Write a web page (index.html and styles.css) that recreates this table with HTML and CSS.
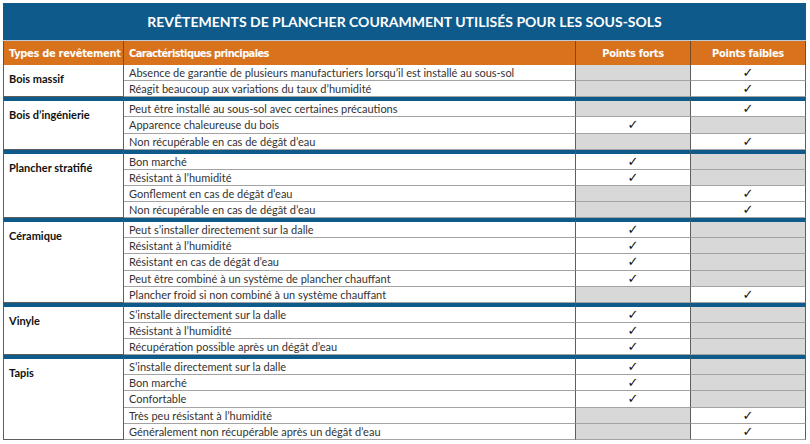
FILE: index.html
```html
<!DOCTYPE html>
<html lang="fr">
<head>
<meta charset="utf-8">
<title>Revêtements de plancher</title>
<link rel="stylesheet" href="styles.css">
</head>
<body>
<div class="sheet">
  <div class="title">REVÊTEMENTS DE PLANCHER COURAMMENT UTILISÉS POUR LES SOUS-SOLS</div>
  <table class="grid">
    <colgroup>
      <col class="c-type"><col class="c-desc"><col class="c-pt"><col class="c-pt">
    </colgroup>
    <thead>
      <tr class="head">
        <th class="h-left">Types de revêtement</th>
        <th class="h-left">Caractéristiques principales</th>
        <th>Points forts</th>
        <th>Points faibles</th>
      </tr>
    </thead>
    <tbody>
      <tr class="first">
        <td class="type" rowspan="2">Bois massif</td>
        <td class="desc">Absence de garantie de plusieurs manufacturiers lorsqu’il est installé au sous-sol</td>
        <td class="off"></td><td class="on">✓</td>
      </tr>
      <tr><td class="desc">Réagit beaucoup aux variations du taux d’humidité</td><td class="off"></td><td class="on">✓</td></tr>

      <tr class="sec">
        <td class="type" rowspan="3">Bois d’ingénierie</td>
        <td class="desc">Peut être installé au sous-sol avec certaines précautions</td>
        <td class="off"></td><td class="on">✓</td>
      </tr>
      <tr><td class="desc">Apparence chaleureuse du bois</td><td class="on">✓</td><td class="off"></td></tr>
      <tr><td class="desc">Non récupérable en cas de dégât d’eau</td><td class="off"></td><td class="on">✓</td></tr>

      <tr class="sec">
        <td class="type" rowspan="4">Plancher stratifié</td>
        <td class="desc">Bon marché</td>
        <td class="on">✓</td><td class="off"></td>
      </tr>
      <tr><td class="desc">Résistant à l’humidité</td><td class="on">✓</td><td class="off"></td></tr>
      <tr><td class="desc">Gonflement en cas de dégât d’eau</td><td class="off"></td><td class="on">✓</td></tr>
      <tr><td class="desc">Non récupérable en cas de dégât d’eau</td><td class="off"></td><td class="on">✓</td></tr>

      <tr class="sec">
        <td class="type" rowspan="5">Céramique</td>
        <td class="desc">Peut s’installer directement sur la dalle</td>
        <td class="on">✓</td><td class="off"></td>
      </tr>
      <tr><td class="desc">Résistant à l’humidité</td><td class="on">✓</td><td class="off"></td></tr>
      <tr><td class="desc">Résistant en cas de dégât d’eau</td><td class="on">✓</td><td class="off"></td></tr>
      <tr><td class="desc">Peut être combiné à un système de plancher chauffant</td><td class="on">✓</td><td class="off"></td></tr>
      <tr><td class="desc">Plancher froid si non combiné à un système chauffant</td><td class="off"></td><td class="on">✓</td></tr>

      <tr class="sec">
        <td class="type" rowspan="3">Vinyle</td>
        <td class="desc">S’installe directement sur la dalle</td>
        <td class="on">✓</td><td class="off"></td>
      </tr>
      <tr><td class="desc">Résistant à l’humidité</td><td class="on">✓</td><td class="off"></td></tr>
      <tr><td class="desc">Récupération possible après un dégât d’eau</td><td class="on">✓</td><td class="off"></td></tr>

      <tr class="sec">
        <td class="type" rowspan="5">Tapis</td>
        <td class="desc">S’installe directement sur la dalle</td>
        <td class="on">✓</td><td class="off"></td>
      </tr>
      <tr><td class="desc">Bon marché</td><td class="on">✓</td><td class="off"></td></tr>
      <tr><td class="desc">Confortable</td><td class="on">✓</td><td class="off"></td></tr>
      <tr><td class="desc">Très peu résistant à l’humidité</td><td class="off"></td><td class="on">✓</td></tr>
      <tr><td class="desc">Généralement non récupérable après un dégât d’eau</td><td class="off"></td><td class="on">✓</td></tr>
    </tbody>
  </table>
</div>
</body>
</html>
```

FILE: styles.css
```css
html, body {
  margin: 0;
  padding: 0;
  background: #ffffff;
}

.sheet {
  width: 803px;
  padding: 3px 0 0 3px;
}

.title {
  height: 37px;
  line-height: 37px;
  background: #0d5a8b;
  color: #ffffff;
  text-align: center;
  font-family: "Lato", "Liberation Sans", sans-serif;
  font-weight: 700;
  font-size: 14px;
  border-bottom: 1px solid #b9c9d6;
}

.grid {
  width: 803px;
  border-collapse: separate;
  border-spacing: 0;
  table-layout: fixed;
  font-family: "Lato", "Liberation Sans", sans-serif;
  font-size: 11px;
  color: #333333;
}

.c-type { width: 121px; }
.c-desc { width: 452px; }
.c-pt { width: 115px; }

.head th {
  background: #d8721d;
  color: #ffffff;
  height: 24px;
  padding: 0 5px;
  font-family: "DejaVu Sans", "Liberation Sans", sans-serif;
  font-stretch: condensed;
  font-weight: 700;
  font-size: 11px;
  letter-spacing: -0.3px;
  text-align: center;
  white-space: nowrap;
  border-right: 1px solid #7a4a20;
}

.head th:first-child { border-left: 1px solid #7a4a20; }

.head th.h-left { text-align: left; }

.head th.h-left + th.h-left { letter-spacing: -0.6px; }

.grid td {
  height: 15.14px;
  line-height: 15px;
  padding: 0;
  border-bottom: 1px solid #a3a3a3;
  border-right: 1px solid #5e5e5e;
  white-space: nowrap;
}

.grid td.type { border-left: 1px solid #5e5e5e; }

.grid td.desc { padding-left: 5px; }

.grid td.type {
  vertical-align: top;
  padding: 6px 0 0 5px;
  font-weight: 700;
  color: #111111;
  border-bottom: 1px solid #5e5e5e;
}

.grid td.off { background: #d8d8d8; }

.grid td.on {
  text-align: center;
  font-family: "DejaVu Sans", sans-serif;
  font-size: 13px;
  color: #111111;
}

.grid tr.sec td { border-top: 4px solid #0d5a8b; }
```
